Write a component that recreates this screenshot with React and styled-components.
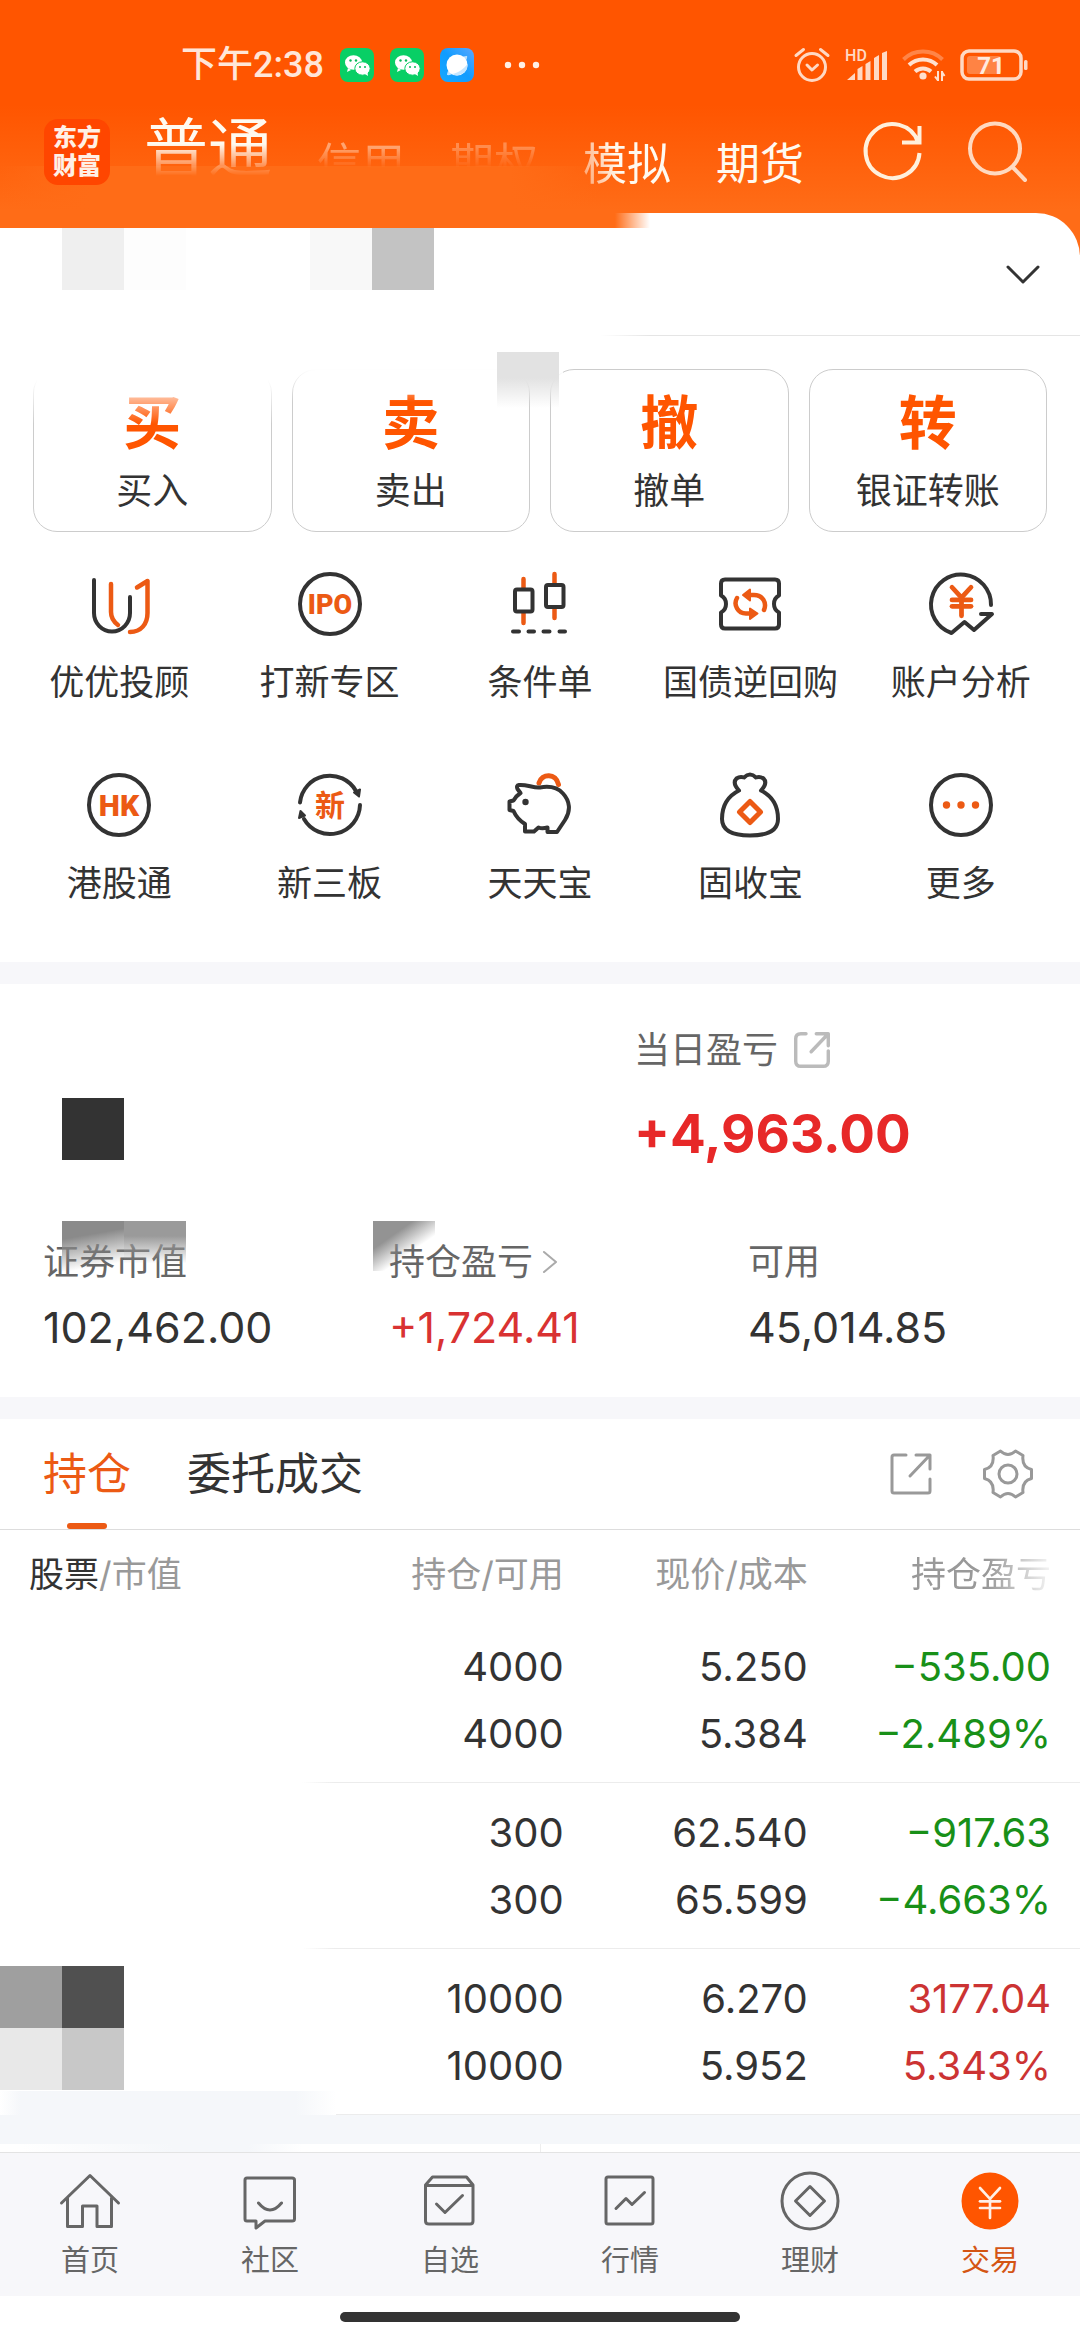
import React, { useState } from "react";
import styled, { createGlobalStyle } from "styled-components";
import { JapaneseYen } from "lucide-react";

const GlobalStyle = createGlobalStyle`
* { box-sizing: border-box; }
body {
  margin: 0;
  background: #fff;
  color: #333;
  font-family: Inter, 'Noto Sans CJK SC', sans-serif;
}
button {
  margin: 0;
  padding: 0;
  border: 0;
  background: none;
  color: inherit;
  font: inherit;
}
a { color: inherit; text-decoration: none; }
svg { display: block; flex: none; overflow: visible; }
h1, p { margin: 0; font-weight: 400; }
`

const Page = styled.div`
width: 100%;
overflow: hidden;
`

/* ---------- header ---------- */

const Header = styled.header`
padding-bottom: 58px;
margin-bottom: -44px;
background:
  linear-gradient(to right, rgba(255, 108, 23, 0) 0, #ff6c17 90px, #ff6c17 510px, rgba(255, 108, 23, 0) 600px) 0 166px / 100% 47px no-repeat,
  linear-gradient(#ff5500 105px, #ff6c17 210px);
`

const StatusBar = styled.div`
display: flex;
align-items: center;
height: 105px;
padding: 25px 52px 0 181px;
gap: 30px;
color: #ffe6d8;
`

const Notices = styled.div`
display: flex;
align-items: center;
gap: 16px;
`

const Time = styled.span`
font-family: Roboto, 'Noto Sans CJK SC', sans-serif;
font-size: 36px;
line-height: 40px;
font-weight: 500;
`

const StatusIcons = styled.div`
display: flex;
align-items: center;
gap: 15px;
margin-left: auto;
`

const TitleBar = styled.div`
display: flex;
align-items: center;
height: 94px;
padding: 0 53px 0 44px;
`

const Logo = styled.h1`
width: 66px;
height: 66px;
padding-top: 3px;
border-radius: 14px;
background: #ff4600;
color: #fff0e6;
font-family: 'Noto Sans CJK SC', sans-serif;
font-size: 24px;
line-height: 28px;
font-weight: 900;
text-align: center;
`

const AccountTabs = styled.nav`
display: flex;
align-items: flex-end;
gap: 45px;
margin-left: 34px;
padding-bottom: 8px;
`

const AccountTab = styled.button`
font-size: ${props => props.$large ? "64px" : "44px"};
line-height: ${props => props.$large ? "80px" : "48px"};
color: #fffaf0;
white-space: nowrap;
${props => props.$mask ? `mask-image: linear-gradient(${props.$mask});` : ""}
`

const TitleActions = styled.div`
display: flex;
gap: 44px;
margin-left: auto;
`

/* ---------- sheet ---------- */

const Sheet = styled.main`
position: relative;
border-top-right-radius: 44px;
background:
  linear-gradient(to right, #ff6c17 615px, rgba(255, 108, 23, 0) 650px) 0 0 / 100% 15px no-repeat,
  #fff;
`

const AccountRow = styled.section`
display: flex;
justify-content: space-between;
height: 123px;
padding: 15px 40px 15px 62px;
background: linear-gradient(to right, rgba(229, 229, 229, 0) 600px, #e5e5e5 650px) 0 100% / 100% 1px no-repeat;
`

const Tiles = styled.div`
display: flex;
flex-wrap: wrap;
align-content: flex-start;
width: ${props => props.$cols * 62}px;
`

const Tile = styled.span`
width: 62px;
height: 62px;
background: ${props => props.$color};
`

const ActionGrid = styled.section`
position: relative;
display: grid;
grid-template-columns: repeat(4, 1fr);
gap: 20px;
padding: 33px 33px 0;
`

const ActionCard = styled.button`
height: 163px;
border: 1px solid #ccc;
border-radius: 24px;
text-align: center;
`

const ActionGlyph = styled.span`
display: block;
color: #ff5500;
font-family: 'Noto Sans CJK SC', sans-serif;
font-size: 58px;
line-height: 80px;
font-weight: 700;
`

const ActionLabel = styled.span`
display: block;
font-size: 36px;
line-height: 64px;
`

/* white haze that hides the upper edge of the first cards */
const Haze = styled.span`
position: absolute;
left: ${props => props.$left}px;
top: 0;
width: ${props => props.$width}px;
height: ${props => props.$height}px;
background: linear-gradient(#fff 50%, rgba(255, 255, 255, 0));
`

const HazeTile = styled.span`
position: absolute;
left: 497px;
top: 16px;
width: 62px;
height: 56px;
background: linear-gradient(#e2e2e2 26px, rgba(226, 226, 226, 0));
`

const FeatureGrid = styled.section`
display: grid;
grid-template-columns: repeat(5, 1fr);
row-gap: 59px;
padding: 36px 14px 51px;
`

const Feature = styled.button`
display: flex;
flex-direction: column;
align-items: center;
gap: 14px;
font-size: 35px;
line-height: 56px;
white-space: nowrap;
`

const Band = styled.div`
height: 22px;
background: #f7f7fa;
`

/* ---------- assets ---------- */

const Assets = styled.section`
padding: 38px 43px 40px;
`

const TodayRow = styled.div`
display: grid;
grid-template-columns: 591fr 403fr;
margin-bottom: 63px;
`

const HiddenTotal = styled.div`
padding: 76px 0 0 19px;
`

const Label = styled.p`
display: flex;
align-items: center;
gap: ${props => props.$gap || 0}px;
color: #666;
font-size: 36px;
line-height: ${props => props.$tall ? "56px" : "50px"};
`

const TodayValue = styled.p`
margin-top: 16px;
color: #e72828;
font-size: 53px;
line-height: 80px;
font-weight: 700;
`

const Figures = styled.div`
display: grid;
grid-template-columns: 346fr 359fr 289fr;
`

const Figure = styled.div`
position: relative;
`

const FigureValue = styled.p`
margin-top: 10px;
color: ${props => props.$up ? "#d93232" : "#333"};
font-size: 43px;
line-height: 60px;
`

const Patch = styled.span`
position: absolute;
left: ${props => props.$left}px;
top: -16px;
width: 62px;
height: 50px;
background: linear-gradient(${props => props.$angle}, ${props => props.$color} 30%, rgba(160, 160, 160, 0) ${props => props.$end || "85%"});
`

/* ---------- positions ---------- */

const TabBar = styled.div`
display: flex;
align-items: center;
gap: 56px;
height: 111px;
padding: 0 46px 0 43px;
border-bottom: 1px solid #ddd;
`

const Tab = styled.button`
position: relative;
height: 110px;
color: ${props => props.$active ? "#ec5a14" : "#333"};
font-size: 44px;
line-height: 110px;
&::after {
  content: "";
  position: absolute;
  left: calc(50% - 20px);
  bottom: 0;
  width: 40px;
  height: 6px;
  border-radius: 3px;
  background: ${props => props.$active ? "#ec5a14" : "none"};
}
`

const TabTools = styled.div`
display: flex;
align-items: center;
gap: 50px;
margin-left: auto;
`

const Table = styled.table`
width: 100%;
border-collapse: collapse;
table-layout: fixed;
`

const HeadCell = styled.th`
width: ${props => props.$width};
height: 87px;
padding: 0 ${props => props.$last ? "29px" : "0"} 4px ${props => props.$first ? "29px" : "0"};
color: #999;
font-size: 35px;
font-weight: 400;
text-align: ${props => props.$first ? "left" : "right"};
white-space: nowrap;
${props => props.$last ? "mask-image: linear-gradient(to right, #000 66%, rgba(0, 0, 0, 0) 92%);" : ""}
b {
  color: #333;
  font-weight: 400;
}
`

const Row = styled.tr`
height: 166px;
background: linear-gradient(to right, rgba(236, 236, 236, 0) 28%, #ececec 31%) 0 100% / 100% 1px no-repeat;
`

const HiddenName = styled.td`
padding: 17px 0 0;
vertical-align: top;
`

const Cell = styled.td`
padding: 0 ${props => props.$last ? "29px" : "0"} 0 0;
color: ${props => props.$tone || "#333"};
font-size: 40px;
line-height: 67px;
text-align: right;
p { margin: 0; }
`

const Footnote = styled.div`
height: 29px;
background: #f5f7fa;
`

const NextBlock = styled.div`
height: 8px;
background:
  linear-gradient(#eee, #eee) 50% 0 / 1px 100% no-repeat,
  linear-gradient(to right, #fff 2%, #f5f7fa 16%, #f5f7fa 23%, #fff 28%);
`

const HazeFoot = styled.span`
position: absolute;
left: 0;
bottom: 0;
width: 336px;
height: 24px;
background: linear-gradient(to right, #fff, #f5f7fa 6%, #f5f7fa 88%, #fff);
`

const Positions = styled.section`
position: relative;
`

/* ---------- bottom bar ---------- */

const BottomNav = styled.nav`
display: grid;
grid-template-columns: repeat(6, 1fr);
height: 144px;
padding-top: 18px;
border-top: 1px solid #e3e3e3;
background: #f7f7fa;
`

const NavLink = styled.a`
display: flex;
flex-direction: column;
align-items: center;
gap: 8px;
color: ${props => props.$active ? "#d45514" : "#666"};
font-size: 29px;
line-height: 44px;
`

const HomeArea = styled.div`
display: flex;
justify-content: center;
height: 44px;
padding-top: 16px;
background: #fff;
`

const HomeBar = styled.span`
width: 37%;
height: 10px;
border-radius: 5px;
background: #333;
`

/* ---------- drawings ---------- */

const DARK = "#333"
const HOT = "#ec5a14"

const Glyph = ({ size = 72, box, color = DARK, width = 4, children }) => (
	<svg width={size} height={size} viewBox={`0 0 ${box || size} ${box || size}`} fill="none" stroke={color} strokeWidth={width} strokeLinecap="round" strokeLinejoin="round" aria-hidden="true">
		{children}
	</svg>
)

const GlyphText = styled.text`
fill: ${props => props.$color || HOT};
stroke: none;
font-family: ${props => props.$font || "Roboto"}, 'Noto Sans CJK SC', sans-serif;
font-size: ${props => props.$size}px;
font-weight: ${props => props.$weight || 700};
text-anchor: middle;
`

const WeChat = () => (
	<svg width="34" height="34" viewBox="0 0 34 34" aria-hidden="true">
		<rect width="34" height="34" rx="8" fill="#08cf65" />
		<ellipse cx="13.500" cy="14.500" rx="8.500" ry="7.300" fill="#fff" />
		<path d="M8 20l-1 4 4-2z" fill="#fff" />
		<ellipse cx="22.500" cy="20.500" rx="7.700" ry="6.700" fill="#fff" stroke="#08cf65" strokeWidth="1" />
		<path d="M25 26l3 2-.5-4z" fill="#fff" />
		<g fill="#08b858">
			<circle cx="10.500" cy="12.500" r="1.200" /><circle cx="16" cy="12.500" r="1.200" />
			<circle cx="20" cy="19" r="1" /><circle cx="25" cy="19" r="1" />
		</g>
	</svg>
)

const Planet = () => (
	<svg width="34" height="34" viewBox="0 0 34 34" aria-hidden="true">
		<defs>
			<linearGradient id="planet" x1="0" y1="1" x2="1" y2="0">
				<stop offset="0" stopColor="#18a8ff" /><stop offset="0.5" stopColor="#109cff" /><stop offset="1" stopColor="#5aa8ff" />
			</linearGradient>
		</defs>
		<rect width="34" height="34" rx="8" fill="url(#planet)" />
		<path d="M7 27C7 20 20 7 27 8C29 12 14 29 7 27Z" fill="#bfe2ff" />
		<circle cx="17" cy="17" r="10.500" fill="#fff" />
		<path d="M27.500 16A10.500 10.500 0 0 1 12 26C18 25 24 21 27.500 16Z" fill="#c5e6ff" />
	</svg>
)

const Dots = () => (
	<svg width="36" height="8" viewBox="0 0 36 8" fill="#fff0e6" aria-hidden="true">
		<circle cx="4" cy="4" r="3.200" /><circle cx="18" cy="4" r="3.200" /><circle cx="32" cy="4" r="3.200" />
	</svg>
)

const Alarm = () => (
	<svg width="36" height="36" viewBox="0 0 36 36" fill="none" stroke="#ffd9c4" strokeWidth="3" strokeLinecap="round" strokeLinejoin="round" aria-hidden="true">
		<circle cx="18" cy="20" r="13.500" />
		<path d="M13 18l5 5 5.500-5M2 8.500l7.500-6M34 8.500l-7.500-6" />
	</svg>
)

const Signal = () => (
	<svg width="42" height="36" viewBox="0 0 42 36" fill="#ffd9c4" aria-hidden="true">
		<GlyphText $color="#ffd9c4" $size={16} $weight={500} x="11" y="14">HD</GlyphText>
		<path d="M2 33L10 26V33ZM12.500 22L17.500 19V33H12.500ZM20.500 17L25.500 14V33H20.500ZM29 11L34 8V33H29ZM37 6L42 4V33H37Z" />
	</svg>
)

const Wifi = () => (
	<svg width="43" height="36" viewBox="0 0 43 36" fill="none" stroke="#ffe0cf" strokeWidth="4" aria-hidden="true">
		<path d="M1.500 12.500A28 28 0 0 1 40.500 12.500" opacity="0.350" />
		<path d="M7 18A20.500 20.500 0 0 1 35 18M13 24.500A12 12 0 0 1 29 24.500" />
		<circle cx="21" cy="29" r="3.600" fill="#ffe0cf" stroke="none" />
		<path d="M36 24V34M36 33.500l-3-4M40 34V24M40 25l2.500 4" strokeWidth="2" />
	</svg>
)

const Battery = () => (
	<svg width="68" height="32" viewBox="0 0 68 32" aria-hidden="true">
		<rect x="2" y="2" width="59" height="28" rx="7" fill="none" stroke="#ffd9c4" strokeWidth="3.500" />
		<rect x="7" y="7" width="34" height="18" rx="3" fill="#ff8344" />
		<rect x="64" y="11" width="3.500" height="10" rx="1.500" fill="#ffd9c4" />
		<GlyphText $color="#ffeadf" $size={24} x="31" y="25">71</GlyphText>
	</svg>
)

const Share = ({ size, color, width, round }) => (
	<Glyph size={size} box={42} color={color} width={width}>
		<path d={round ? "M14 2H8Q2 2 2 8V34Q2 40 8 40H34Q40 40 40 34V22" : "M16 2H4Q2 2 2 4V38Q2 40 4 40H38Q40 40 40 38V26"} />
		<path d="M26 2H40V16M40 2L20 23" />
	</Glyph>
)

const icons = {
	advisor: <Glyph>
		<path d="M11 12V45A18 18.500 0 0 0 47 45V29" />
		<path d="M28 16V44C28 50 31 54 35 57M54 19.500L64.500 13V45C64.500 56 58 64 47 64" stroke={HOT} strokeWidth="4.500" />
	</Glyph>,
	ipo: <Glyph>
		<circle cx="36" cy="36" r="30" />
		<GlyphText $size={27} $weight={900} x="36" y="45.500">IPO</GlyphText>
	</Glyph>,
	order: <Glyph>
		<path d="M19.500 11V55M50.500 6V50" stroke={HOT} strokeWidth="4.500" />
		<rect x="11" y="21.500" width="17.500" height="22" rx="2" fill="#fff" />
		<rect x="42" y="17" width="17.500" height="22" rx="2" fill="#fff" />
		<path d="M9 63.500H15M24.500 63.500H30M39.500 63.500H45.500M55.500 63.500H61" />
	</Glyph>,
	repo: <Glyph>
		<path d="M11 11.500H61Q65 11.500 65 15.500V27.500Q60 30 60 36T65 44.500V56.500Q65 60.500 61 60.500H11Q7 60.500 7 56.500V44.500Q12 42 12 36T7 27.500V15.500Q7 11.500 11 11.500Z" />
		<path d="M50 42C53 35 49 27 40 27H35M23 30C19 37 24 45.500 32 45.500H37" stroke={HOT} strokeWidth="4.500" />
		<path d="M29 27L36 21.500V32.500ZM43.500 45.500L36 40.500V51Z" stroke={HOT} fill={HOT} strokeWidth="2" />
	</Glyph>,
	analysis: <Glyph>
		<path d="M66 37A30 30 0 1 0 26.500 65L39.500 54L49 62L67 46H56" />
		<JapaneseYen x="17.500" y="14.500" size={38} color={HOT} strokeWidth={3} />
	</Glyph>,
	hk: <Glyph>
		<circle cx="36" cy="36" r="30" />
		<GlyphText $size={30} $weight={900} x="36" y="46.500">HK</GlyphText>
	</Glyph>,
	neeq: <Glyph>
		<path d="M6 33.500A30 30 0 0 1 62 22M66 36A30 30 0 0 1 10 50" />
		<path d="M65 27.500L60 23.500L66 20.500ZM6.500 42L5 49L11 46.500Z" fill={DARK} strokeWidth="2" />
		<GlyphText $font="'Noto Sans CJK SC'" $size={30} x="36" y="47">新</GlyphText>
	</Glyph>,
	pig: <Glyph>
		<path d="M35 14C38 4 52 4 54.500 15.500" stroke={HOT} strokeWidth="5" />
		<path d="M13.500 20Q12 16.500 15 16C22 15 30 19.500 36 18.500C47 16.500 54 19 59 24.500C66 32 67 42 61 51L53 63H43.500V58.500Q38 60 34.500 58.500L30 62.500H21V55Q13 50 9.500 42L5.500 41V32.500L9.500 31.500Q12 27 16.500 24Z" />
		<circle cx="21.500" cy="33" r="3.200" fill={DARK} stroke="none" />
	</Glyph>,
	bag: <Glyph>
		<path d="M25 21.500Q18 14 22.500 9.500Q26 7 30 8.500Q36 2.500 42 8.500Q46 7 49.500 9.500Q54 14 47 21.500C60 28 64 38 64 50C64 62 52 66.500 36 66.500C20 66.500 8 62 8 50C8 38 12 28 25 21.500Z" />
		<path d="M36 32.500L46.500 43L36 53.500L25.500 43Z" stroke={HOT} strokeWidth="5" />
	</Glyph>,
	more: <Glyph>
		<circle cx="36" cy="36" r="30" />
		<g fill={HOT} stroke="none">
			<circle cx="21.500" cy="36" r="3.700" /><circle cx="36" cy="36" r="3.700" /><circle cx="50.500" cy="36" r="3.700" />
		</g>
	</Glyph>,
}

const navIcons = {
	home: <path d="M1.500 32L30 4.500L58.500 32M7.500 27V55.500H22.500V35H37V55.500H51.500V27" />,
	community: <path d="M7 7H52Q54.500 7 54.500 9V48Q54.500 50 52 50H25L16 57V50H7Q5 50 5 48V9Q5 7 7 7ZM18.500 32Q30 46 41.500 32" />,
	watch: <path d="M5.500 14L12.500 6H46.500L53 14V50Q53 53 50 53H9Q5.500 53 5.500 50ZM5.500 14.500H53M16.500 33L25 41.500L42.500 24.500" />,
	market: <path d="M8 6H51Q53 6 53 8V51Q53 53 51 53H8Q6 53 6 51V8Q6 6 8 6ZM16 37.500L26 27.500L32 33.500L44.500 21.500" />,
	wealth: <><circle cx="30" cy="30" r="28" /><path d="M30 15.500L44.500 30L30 44.500L15.500 30Z" /></>,
	trade: <>
		<circle cx="30" cy="30" r="28.500" fill="#ff5500" stroke="none" />
		<JapaneseYen x="10" y="12" size={40} color="#fff0e6" strokeWidth={1.6} />
	</>,
}

const actions = [
	["买", "买入"],
	["卖", "卖出"],
	["撤", "撤单"],
	["转", "银证转账"],
]

const features = [
	["advisor", "优优投顾"],
	["ipo", "打新专区"],
	["order", "条件单"],
	["repo", "国债逆回购"],
	["analysis", "账户分析"],
	["hk", "港股通"],
	["neeq", "新三板"],
	["pig", "天天宝"],
	["bag", "固收宝"],
	["more", "更多"],
]

const positions = [
	{ held: ["4000", "4000"], price: ["5.250", "5.384"], pnl: ["−535.00", "−2.489%"], tone: "#189018" },
	{ held: ["300", "300"], price: ["62.540", "65.599"], pnl: ["−917.63", "−4.663%"], tone: "#189018" },
	{ held: ["10000", "10000"], price: ["6.270", "5.952"], pnl: ["3177.04", "5.343%"], tone: "#cc3333", tiles: ["#9f9f9f", "#505050", "#e8e8e8", "#c8c8c8"] },
]

const links = [
	["home", "首页"],
	["community", "社区"],
	["watch", "自选"],
	["market", "行情"],
	["wealth", "理财"],
	["trade", "交易"],
]

export default function App() {
	const [tab, setTab] = useState("持仓")

	return (
		<Page>
			<GlobalStyle />
			<Header>
				<StatusBar>
					<Notices>
						<Time>下午2:38</Time>
						<WeChat />
						<WeChat />
						<Planet />
					</Notices>
					<Dots />
					<StatusIcons>
						<Alarm />
						<Signal />
						<Wifi />
						<Battery />
					</StatusIcons>
				</StatusBar>
				<TitleBar>
					<Logo>东方<br />财富</Logo>
					<AccountTabs>
						<AccountTab $large $mask="#000 45%, rgba(0, 0, 0, 0) 85%">普通</AccountTab>
						<AccountTab $mask="rgba(0, 0, 0, 0.45) 15%, rgba(0, 0, 0, 0) 58%">信用</AccountTab>
						<AccountTab $mask="rgba(0, 0, 0, 0.3) 15%, rgba(0, 0, 0, 0) 58%">期权</AccountTab>
						<AccountTab $mask="75deg, rgba(0, 0, 0, 0.4), #000 40%">模拟</AccountTab>
						<AccountTab>期货</AccountTab>
					</AccountTabs>
					<TitleActions>
						<button aria-label="刷新">
							<Glyph size={60} color="#fff0dc">
								<path d="M56.500 31A27 27 0 1 1 55 20M56.500 4V20.500H39" strokeLinecap="butt" strokeLinejoin="miter" />
							</Glyph>
						</button>
						<button aria-label="搜索">
							<Glyph size={60} color="#ffd9c0">
								<circle cx="28" cy="26.500" r="25" />
								<path d="M45.500 45L58 58" />
							</Glyph>
						</button>
					</TitleActions>
				</TitleBar>
			</Header>

			<Sheet>
				<AccountRow>
					<Tiles $cols={6}>
						{["#efefef", "#fdfdfd", "#fff", "#fff", "#f8f8f8", "#c3c3c3"].map((c, i) => <Tile key={i} $color={c} />)}
					</Tiles>
					<button aria-label="展开账户">
						<Glyph size={34} width={3}>
							<path d="M2 9L17 24L32 9" />
						</Glyph>
					</button>
				</AccountRow>

				<ActionGrid>
					{actions.map(([glyph, label]) => (
						<ActionCard key={label}>
							<ActionGlyph>{glyph}</ActionGlyph>
							<ActionLabel>{label}</ActionLabel>
						</ActionCard>
					))}
					<Haze $left={0} $width={275} $height={88} />
					<Haze $left={275} $width={288} $height={66} />
					<HazeTile />
				</ActionGrid>

				<FeatureGrid>
					{features.map(([icon, label]) => (
						<Feature key={icon}>
							{icons[icon]}
							{label}
						</Feature>
					))}
				</FeatureGrid>
				<Band />

				<Assets>
					<TodayRow>
						<HiddenTotal><Tiles $cols={1}><Tile $color="#333" /></Tiles></HiddenTotal>
						<div>
							<Label $tall $gap={16}>当日盈亏 <Share size={36} color="#bbb" width={4} round /></Label>
							<TodayValue>+4,963.00</TodayValue>
						</div>
					</TodayRow>
					<Figures>
						<Figure>
							<Label>证券市值</Label>
							<FigureValue>102,462.00</FigureValue>
							<Patch $left={19} $angle="170deg" $color="#8a8a8a" />
							<Patch $left={81} $angle="180deg" $color="#9a9a9a" />
						</Figure>
						<Figure>
							<Label $gap={6}>
								持仓盈亏
								<Glyph size={22} color="#aaa" width={2}><path d="M5 1L17 11L5 21" /></Glyph>
							</Label>
							<FigureValue $up>+1,724.41</FigureValue>
							<Patch $left={-16} $angle="145deg" $color="#939393" $end="62%" />
						</Figure>
						<Figure>
							<Label>可用</Label>
							<FigureValue>45,014.85</FigureValue>
						</Figure>
					</Figures>
				</Assets>
				<Band />

				<Positions>
					<TabBar>
						{["持仓", "委托成交"].map(name => (
							<Tab key={name} $active={tab === name} onClick={() => setTab(name)}>{name}</Tab>
						))}
						<TabTools>
							<button aria-label="分享"><Share size={42} color="#999" width={3} /></button>
							<button aria-label="设置">
								<Glyph size={52} color="#999" width={3}>
									<path d="M18.500 3Q26 10 33.500 3L41 7.500Q39.500 19 49.500 21.500V30.500Q39.500 33 41 44.500L33.500 49Q26 42 18.500 49L11 44.500Q12.500 33 2.500 30.500V21.500Q12.500 19 11 7.500Z" />
									<circle cx="26" cy="26" r="9" />
								</Glyph>
							</button>
						</TabTools>
					</TabBar>
					<Table>
						<thead>
							<tr>
								<HeadCell $first $width="30%"><b>股票</b>/市值</HeadCell>
								<HeadCell $width="22.2%">持仓/可用</HeadCell>
								<HeadCell $width="22.6%">现价/成本</HeadCell>
								<HeadCell $last $width="25.2%">持仓盈亏</HeadCell>
							</tr>
						</thead>
						<tbody>
							{positions.map(({ held, price, pnl, tone, tiles }) => (
								<Row key={pnl[0]}>
									<HiddenName>
										{tiles && <Tiles $cols={2}>{tiles.map(c => <Tile key={c} $color={c} />)}</Tiles>}
									</HiddenName>
									<Cell>{held.map((v, i) => <p key={i}>{v}</p>)}</Cell>
									<Cell>{price.map((v, i) => <p key={i}>{v}</p>)}</Cell>
									<Cell $last $tone={tone}>{pnl.map((v, i) => <p key={i}>{v}</p>)}</Cell>
								</Row>
							))}
						</tbody>
					</Table>
					<HazeFoot />
				</Positions>
				<Footnote />
				<NextBlock />
			</Sheet>

			<BottomNav>
				{links.map(([icon, label]) => (
					<NavLink key={icon} href={`#${icon}`} $active={icon === "trade"}>
						<Glyph size={60} color="#666" width={3}>{navIcons[icon]}</Glyph>
						{label}
					</NavLink>
				))}
			</BottomNav>
			<HomeArea><HomeBar /></HomeArea>
		</Page>
	);
}
